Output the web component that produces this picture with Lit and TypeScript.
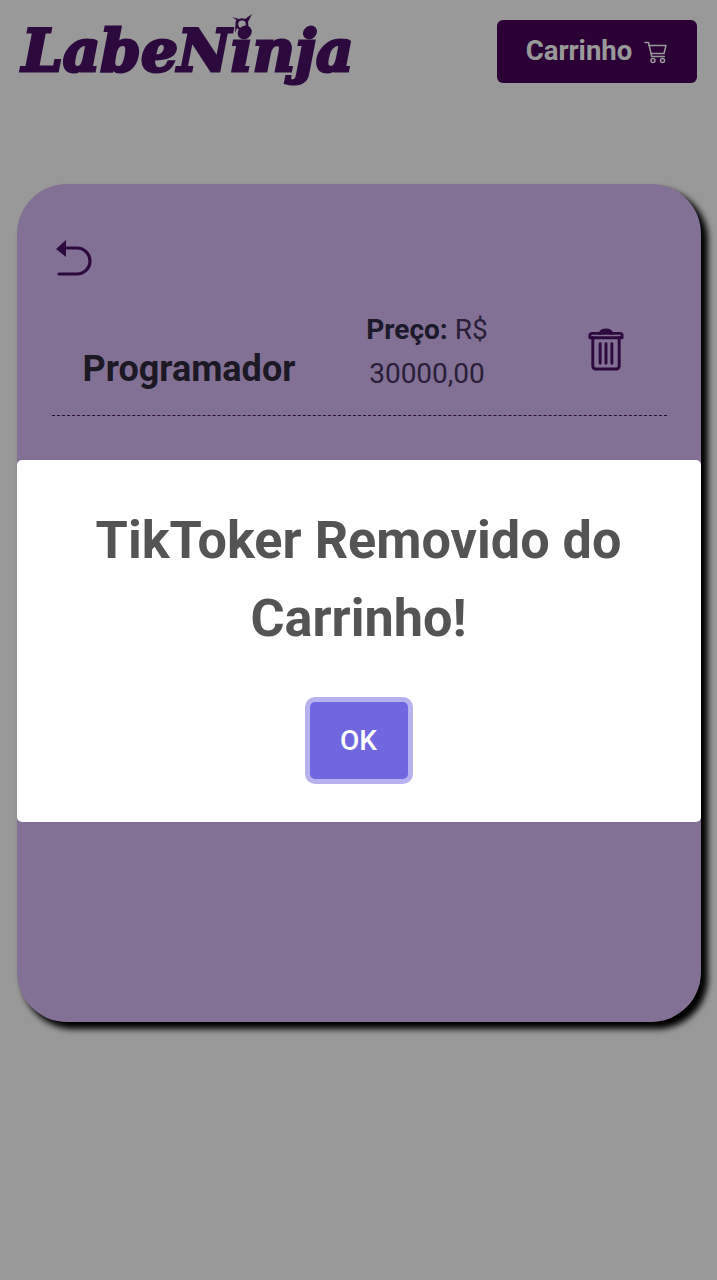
import { LitElement, html, css } from "lit";
import { customElement } from "lit/decorators.js";

@customElement("app-root")
export class AppRoot extends LitElement {
  static styles = css`
    :host { display: block; position: relative; height: 1280px; overflow: hidden; background: #fff; font-family: Roboto, "Noto Sans", sans-serif; }
    header { display: flex; justify-content: space-between; align-items: center; height: 63px; padding: 20px 20px 0 20px; }
    .logo { position: relative; display: block; margin-left: 2px; font: italic 700 58px/65px "DejaVu Serif", serif; color: #4b1167; -webkit-text-stroke: 3px #4b1167; white-space: nowrap; }
    .star { position: absolute; left: 209px; top: -6px; width: 22px; height: 22px; }
    .cart-btn { display: flex; align-items: center; justify-content: center; gap: 12px; box-sizing: border-box; width: 200px; height: 63px; padding-bottom: 3px; background: #460059; border-radius: 6px; color: #fff; font-size: 27.5px; font-weight: 700; }
    .cart-btn svg { width: 24px; height: 24px; margin-top: 3px; }
    .card { box-sizing: border-box; width: 684px; height: 838px; margin: 101px 0 0 17px; padding: 56px 34px 0 35px; background: #d9bcf8; border-radius: 50px; box-shadow: 6px 6px 6px 1px #000; }
    .back { display: block; width: 38px; height: 38px; margin-left: 2px; }
    .row { display: grid; grid-template-columns: 274px 202px 139px; margin-top: 30px; padding-bottom: 19px; border-bottom: 1px dashed #4b1167; }
    .name { align-self: end; justify-self: center; margin-bottom: 5px; font-size: 36px; line-height: 44px; font-weight: 700; color: #2f2b3f; }
    .price { justify-self: center; width: 130px; text-align: center; font-size: 28px; line-height: 44px; color: #463360; }
    .price b { color: #2e2b46; }
    .trash { align-self: start; justify-self: center; width: 38px; height: 43px; margin: 20px 0 0 17px; }
    .overlay { position: absolute; inset: 0; box-sizing: border-box; padding-top: 2px; display: flex; align-items: center; justify-content: center; background: rgba(0, 0, 0, 0.4); }
    .modal { box-sizing: border-box; width: 684px; height: 362px; padding: 42px 30px 0; background: #fff; border-radius: 5px; text-align: center; }
    h2 { margin: 0; font-size: 52.2px; line-height: 78px; font-weight: 700; color: #545454; }
    .ok { display: block; box-sizing: border-box; width: 98px; height: 77px; margin: 44px auto 0; border: 0; border-radius: 5px; background: #7066e0; box-shadow: 0 0 0 5px rgba(112, 102, 224, 0.5); color: #fff; font: 500 28px Roboto, sans-serif; }
  `;

  render() {
    return html`
      <header>
        <div class="logo">LabeNinja
          <svg class="star" viewBox="0 0 22 22" fill="#4b1167">
            <path fill-rule="evenodd" d="M1 4 L8 6 Q11 4.500 14 6 L21 1 L17 9 Q18 12 16.500 14 L20 20 L12 17.500 Q8 18 6 15 L4 20 L4.500 11 Q4 8 5.500 7 Z M11 7.500 A3.800 3.800 0 1 0 11.010 15.100 A3.800 3.800 0 1 0 11 7.500 Z"/>
          </svg>
        </div>
        <div class="cart-btn">Carrinho
          <svg viewBox="0 0 24 24" fill="none" stroke="#fff" stroke-width="1.5" stroke-linecap="round" stroke-linejoin="round">
            <path d="M1 2.500h3.500l3.200 14h12.600"/><path d="M5 5.500h17l-2 8H7"/>
            <circle cx="9" cy="20.500" r="2"/><circle cx="18.500" cy="20.500" r="2"/>
          </svg>
        </div>
      </header>
      <main class="card">
        <svg class="back" viewBox="0 0 38 38" fill="none" stroke="#4b1167" stroke-width="3.200">
          <path d="M12 8h11a13 13 0 0 1 0 26H5" stroke-linecap="round"/>
          <path d="M2 9 12 0v17z" fill="#4b1167" stroke="none"/>
        </svg>
        <div class="row">
          <div class="name">Programador</div>
          <div class="price"><b>Preço:</b> R$ 30000,00</div>
          <svg class="trash" viewBox="0 0 38 44" fill="none" stroke="#4b1167" stroke-width="3" stroke-linecap="round" stroke-linejoin="round">
            <path d="M2.500 10V7.500a2 2 0 0 1 2-2h29a2 2 0 0 1 2 2V10z"/>
            <path d="M13 5.500c1-3 3-3.500 6-3.500s5 .5 6 3.500" fill="#4b1167"/>
            <path d="M5.500 10v29a3 3 0 0 0 3 3h21a3 3 0 0 0 3-3V10"/>
            <path d="M13 16v20M19 16v20M25 16v20"/>
          </svg>
        </div>
      </main>
      <div class="overlay">
        <div class="modal">
          <h2>TikToker Removido do Carrinho!</h2>
          <button class="ok">OK</button>
        </div>
      </div>
    `;
  }
}
